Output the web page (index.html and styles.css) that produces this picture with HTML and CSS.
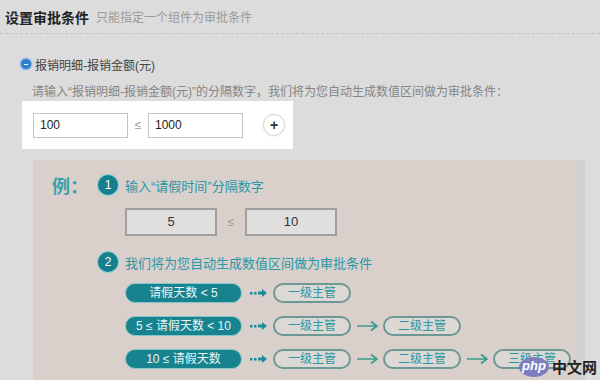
FILE: index.html
```html
<!DOCTYPE html>
<html lang="zh-CN">
<head>
    <meta charset="UTF-8">
    <title>设置审批条件</title>
    <link rel="stylesheet" href="styles.css">
</head>
<body>
    <div class="header">
        <span class="title">设置审批条件</span>
        <span class="subtitle">只能指定一个组件为审批条件</span>
    </div>

    <div class="option">
        <span class="radio"></span>
        <span>报销明细-报销金额(元)</span>
    </div>
    <div class="hint">请输入“报销明细-报销金额(元)”的分隔数字，我们将为您自动生成数值区间做为审批条件：</div>

    <div class="range-box">
        <input class="range-input" type="text" value="100">
        <span class="le">≤</span>
        <input class="range-input" type="text" value="1000">
        <button class="add" type="button">+</button>
    </div>

    <div class="example">
        <div class="step-row">
            <span class="ex-label">例：</span>
            <span class="num">1</span>
            <span class="step-text">输入“请假时间”分隔数字</span>
        </div>
        <div class="demo-inputs">
            <span class="demo-box">5</span>
            <span class="demo-le">≤</span>
            <span class="demo-box">10</span>
        </div>
        <div class="step-row step-two">
            <span class="num">2</span>
            <span class="step-text">我们将为您自动生成数值区间做为审批条件</span>
        </div>
        <div class="rules">
            <div class="rule">
                <span class="cond">请假天数 &lt; 5</span>
                <svg class="go" width="18" height="10" viewBox="0 0 18 10"><rect x="0" y="4" width="2.5" height="2.5" fill="#1d8b98"/><rect x="4" y="4" width="2.5" height="2.5" fill="#1d8b98"/><path d="M8 3.5h4V1l5 4-5 4V6.5H8z" fill="#1d8b98"/></svg>
                <span class="boss">一级主管</span>
            </div>
            <div class="rule">
                <span class="cond">5 ≤ 请假天数 &lt; 10</span>
                <svg class="go" width="18" height="10" viewBox="0 0 18 10"><rect x="0" y="4" width="2.5" height="2.5" fill="#1d8b98"/><rect x="4" y="4" width="2.5" height="2.5" fill="#1d8b98"/><path d="M8 3.5h4V1l5 4-5 4V6.5H8z" fill="#1d8b98"/></svg>
                <span class="boss">一级主管</span>
                <svg class="then" width="23" height="12" viewBox="0 0 23 12"><path d="M1 6h20M15 1.5l6 4.5-6 4.5" fill="none" stroke="#3b9a8c" stroke-width="1.6"/></svg>
                <span class="boss">二级主管</span>
            </div>
            <div class="rule">
                <span class="cond">10 ≤ 请假天数</span>
                <svg class="go" width="18" height="10" viewBox="0 0 18 10"><rect x="0" y="4" width="2.5" height="2.5" fill="#1d8b98"/><rect x="4" y="4" width="2.5" height="2.5" fill="#1d8b98"/><path d="M8 3.5h4V1l5 4-5 4V6.5H8z" fill="#1d8b98"/></svg>
                <span class="boss">一级主管</span>
                <svg class="then" width="23" height="12" viewBox="0 0 23 12"><path d="M1 6h20M15 1.5l6 4.5-6 4.5" fill="none" stroke="#3b9a8c" stroke-width="1.6"/></svg>
                <span class="boss">二级主管</span>
                <svg class="then" width="23" height="12" viewBox="0 0 23 12"><path d="M1 6h20M15 1.5l6 4.5-6 4.5" fill="none" stroke="#3b9a8c" stroke-width="1.6"/></svg>
                <span class="boss">三级主管</span>
            </div>
        </div>
    </div>

    <div class="watermark">
        <span class="php">php</span>
        <span class="cn">中文网</span>
    </div>
</body>
</html>
```

FILE: styles.css
```css
body {
    margin: 0;
    height: 380px;
    overflow: hidden;
    background-color: #dcdcdc;
    font-family: "Liberation Sans", "Noto Sans CJK SC", sans-serif;
    font-size: 12px;
    color: #333;
    position: relative;
}
.header {
    height: 33px;
    display: flex;
    align-items: center;
    gap: 7px;
    padding-left: 5px;
    border-bottom: 1px dashed #c4c4c4;
}
.title {
    font-size: 14px;
    font-weight: bold;
    color: #222;
}
.subtitle {
    color: #9a9a9a;
}
.option {
    display: flex;
    align-items: center;
    gap: 3px;
    margin: 21px 0 0 20px;
    height: 18px;
    color: #444;
}
.radio {
    width: 10px;
    height: 10px;
    border-radius: 50%;
    background-color: #2f7fd0;
    border: 1px solid #8fb8e6;
    box-shadow: 0 0 2px #9cc3ef;
    position: relative;
}
.radio::after {
    content: "";
    position: absolute;
    left: 3px;
    top: 4.5px;
    width: 4px;
    height: 1.5px;
    background-color: #fff;
}
.hint {
    margin: 9px 0 0 32px;
    color: #858585;
    height: 16px;
}
.range-box {
    margin: 3px 0 0 22px;
    width: 260px;
    height: 48px;
    padding-left: 11px;
    background-color: #fff;
    display: flex;
    align-items: center;
}
.range-input {
    width: 87px;
    height: 23px;
    padding: 0 0 0 6px;
    border: 1px solid #c4c4c4;
    font-family: "Liberation Sans", sans-serif;
    font-size: 12px;
    color: #222;
}
.le {
    width: 20px;
    text-align: center;
    color: #999;
}
.add {
    margin-left: 20px;
    width: 22px;
    height: 22px;
    border-radius: 50%;
    border: 1px solid #d8d8d8;
    background-color: #fff;
    box-shadow: 0 0 2px #e0e0e0;
    padding: 0;
    font-size: 14px;
    font-weight: bold;
    line-height: 18px;
    color: #333;
}
.example {
    margin: 11px 0 0 33px;
    width: 525px;
    height: 210px;
    padding: 13px 0 0 19px;
    background-color: #d9d0cb;
    box-shadow: 8px 0 0 #d0d0d0;
}
.step-row {
    display: flex;
    align-items: center;
    height: 24px;
    color: #2a97a6;
    font-size: 13px;
}
.ex-label {
    font-size: 18px;
    font-weight: bold;
    width: 46px;
    color: #3aa0ab;
}
.num {
    width: 20px;
    height: 20px;
    border-radius: 50%;
    background-color: #157f8d;
    box-shadow: 0 0 0 1px #8ccfd4;
    color: #fff;
    font-size: 12px;
    line-height: 20px;
    text-align: center;
    margin-right: 7px;
}
.demo-inputs {
    display: flex;
    align-items: center;
    margin: 11px 0 0 73px;
}
.demo-box {
    width: 88px;
    height: 24px;
    border: 2px solid #9f9f9f;
    background-color: #e0dfdd;
    text-align: center;
    line-height: 24px;
    font-size: 13px;
    color: #333;
}
.demo-le {
    width: 28px;
    text-align: center;
    color: #999;
}
.step-two {
    margin: 14px 0 0 46px;
}
.rules {
    margin: 9px 0 0 73px;
    display: flex;
    flex-direction: column;
    gap: 13px;
}
.rule {
    display: flex;
    align-items: center;
    height: 20px;
}
.cond {
    width: 115px;
    height: 18px;
    border-radius: 10px;
    background-color: #17838f;
    border: 1px solid #86c6cb;
    color: #e8f6f7;
    text-align: center;
    line-height: 18px;
}
.go {
    margin: 0 5px 0 8px;
}
.boss {
    width: 74px;
    height: 16px;
    border-radius: 10px;
    border: 2px solid #6d9895;
    background-color: #dcd8d4;
    color: #2a97a6;
    text-align: center;
    line-height: 16px;
}
.then {
    margin: 0 4px 0 5px;
}
.watermark {
    position: absolute;
    left: 519px;
    top: 356px;
    display: flex;
    align-items: center;
    gap: 3px;
}
.php {
    width: 30px;
    height: 20px;
    border-radius: 50%;
    background-color: #7b7fbf;
    color: #fff;
    font-style: italic;
    font-weight: bold;
    font-size: 13px;
    line-height: 18px;
    text-align: center;
}
.cn {
    font-size: 15px;
    font-weight: bold;
    color: #222;
}
```
